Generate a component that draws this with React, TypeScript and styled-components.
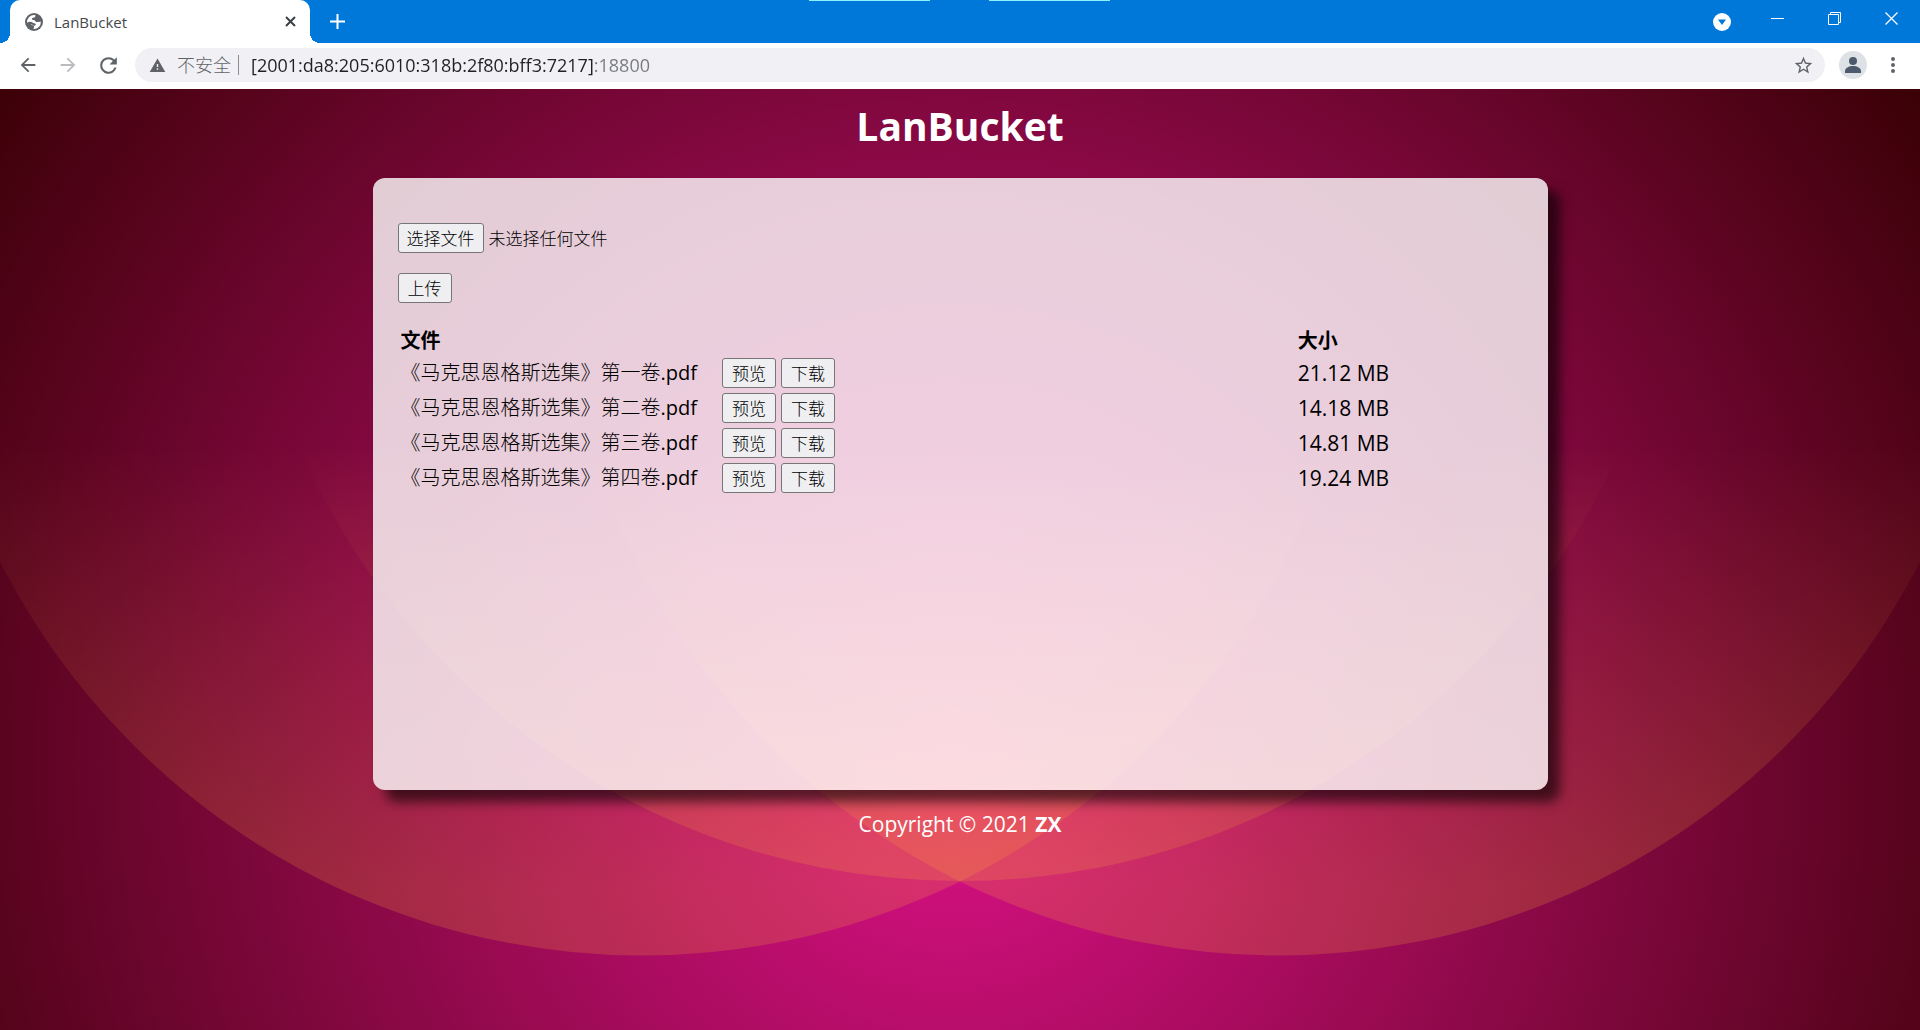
import React, { useState } from "react";
import styled, { createGlobalStyle } from "styled-components";

const fontStack = '"Open Sans", "Noto Sans CJK SC", sans-serif';

const GlobalStyle = createGlobalStyle`
  *, *::before, *::after { box-sizing: border-box; }
  html, body, #root { height: 100%; }
  body { margin: 0; font-family: ${fontStack}; font-size: 20px; color: #000; }
  button, input { font-family: inherit; }
`;

const Window = styled.div`
  min-height: 100%;
  display: flex;
  flex-direction: column;
`;

/* ---------- browser chrome ---------- */

const TabStrip = styled.header`
  position: relative;
  display: flex;
  align-items: center;
  height: 43px;
  padding-left: 10px;
  background: #0078d9;
`;

const TopEdge = styled.span<{ $left: string }>`
  position: absolute;
  top: 0;
  left: ${(p) => p.$left};
  width: 121px;
  height: 1px;
  background: #8ff0ff;
`;

const Tab = styled.div`
  position: relative;
  align-self: stretch;
  display: flex;
  align-items: center;
  gap: 11px;
  width: 300px;
  margin-right: 10px;
  padding: 0 12px 0 15px;
  border-radius: 10px 10px 0 0;
  background: #fff;
  &::before, &::after {
    content: "";
    position: absolute;
    bottom: 0;
    width: 10px;
    height: 10px;
  }
  &::before { right: 100%; background: radial-gradient(circle at 0 0, transparent 10px, #fff 10px); }
  &::after { left: 100%; background: radial-gradient(circle at 100% 0, transparent 10px, #fff 10px); }
`;

const TabTitle = styled.span`
  flex: 1;
  font-size: 15px;
  line-height: 20px;
  color: #45484c;
`;

const IconButton = styled.button<{ $w?: number; $color?: string }>`
  display: flex;
  align-items: center;
  justify-content: center;
  flex: none;
  width: ${(p) => p.$w ?? 40}px;
  height: 34px;
  padding: 0;
  border: 0;
  background: transparent;
  color: ${(p) => p.$color ?? "#5f6368"};
`;

const TabSearch = styled(IconButton)`
  margin: 0 7px 0 auto;
`;

const WindowControls = styled.div`
  display: flex;
  align-items: flex-start;
  height: 40px;
`;

const Toolbar = styled.nav`
  display: flex;
  align-items: center;
  height: 46px;
  padding: 0 7px 2px 8px;
  background: #fff;
`;

const Omnibox = styled.div`
  flex: 1;
  display: flex;
  align-items: center;
  height: 34px;
  margin: 0 8px 0 7px;
  padding: 0 2px 0 14px;
  border-radius: 17px;
  background: #f1f0f5;
  color: #5f6368;
  font-size: 18px;
`;

const Insecure = styled.span`
  margin-left: 11px;
  padding-right: 7px;
  border-right: 1px solid #8a8c90;
  font-weight: 300;
  line-height: 20px;
`;

const Address = styled.input`
  flex: 1;
  min-width: 0;
  margin-left: 12px;
  padding: 0;
  border: 0;
  outline: 0;
  font-size: 18px;
  line-height: 26px;
  color: #202124;
  background: linear-gradient(to right, #202124 343px, #76797d 343px);
  background-clip: text;
  -webkit-background-clip: text;
  -webkit-text-fill-color: transparent;
`;

/* ---------- page ---------- */

const Page = styled.div`
  position: relative;
  flex: 1;
  display: flex;
  flex-direction: column;
  align-items: center;
  overflow: hidden;
  background: #330000;
`;

const Backdrop = styled.svg`
  position: absolute;
  inset: 0;
  width: 100%;
  height: 100%;
`;

const Title = styled.h1`
  position: relative;
  margin: 9px 0 25px;
  font-size: 39px;
  font-weight: 700;
  line-height: 55px;
  color: #fff;
`;

const Card = styled.main`
  position: relative;
  width: 1175px;
  max-width: 92%;
  min-height: 612px;
  padding: 45px 25px 25px;
  border-radius: 12px;
  background: rgba(255, 255, 255, 0.8);
  box-shadow: 12px 12px 12px rgba(0, 0, 0, 0.6);
`;

const UploadForm = styled.form`
  display: flex;
  flex-direction: column;
  align-items: flex-start;
  gap: 20px;
  font-size: 17px;
  font-weight: 300;
`;

const FileRow = styled.div`
  display: flex;
  align-items: center;
  gap: 5px;
  line-height: 30px;
`;

const Picked = styled.span`
  padding-top: 2px;
  line-height: 28px;
`;

const HiddenFile = styled.input`
  position: absolute;
  width: 1px;
  height: 1px;
  opacity: 0;
`;

const buttonLook = `
  display: inline-flex;
  align-items: center;
  justify-content: center;
  min-width: 54px;
  height: 30px;
  padding: 2px 8px 0;
  border: 1px solid #767676;
  border-radius: 3px;
  background: #efeff2;
  color: #000;
  font-size: 17px;
  font-weight: 300;
  line-height: 24px;
`;

const PickLabel = styled.label`${buttonLook}`;
const Button = styled.button`${buttonLook}`;

const Files = styled.table`
  width: 100%;
  margin-top: 23px;
  border-spacing: 2px;
  table-layout: fixed;
  th, td { padding: 1px; text-align: left; vertical-align: middle; }
  th { font-weight: 700; line-height: 24px; }
  td { height: 33px; line-height: 30px; }
`;

const NameHead = styled.th`width: 80%;`;

const NameCell = styled.div`
  display: flex;
  align-items: center;
  gap: 5px;
`;

const FileName = styled.span`
  margin-right: 20px;
  font-weight: 300;
`;

const Extension = styled.span`
  font-weight: 400;
`;

const SizeCell = styled.td`
  font-size: 21px;
`;

const Footer = styled.footer`
  position: relative;
  margin-top: 20px;
  font-size: 21px;
  line-height: 28px;
  color: #fff;
`;

const files = [
  { name: "《马克思恩格斯选集》第一卷", ext: ".pdf", size: "21.12 MB" },
  { name: "《马克思恩格斯选集》第二卷", ext: ".pdf", size: "14.18 MB" },
  { name: "《马克思恩格斯选集》第三卷", ext: ".pdf", size: "14.81 MB" },
  { name: "《马克思恩格斯选集》第四卷", ext: ".pdf", size: "19.24 MB" },
];

const Icon = ({ d, size = 22 }: { d: string; size?: number }) => (
  <svg width={size} height={size} viewBox="0 0 24 24" fill="currentColor" aria-hidden="true">
    <path d={d} />
  </svg>
);

const icons = {
  back: "M20 11H7.83l5.59-5.59L12 4l-8 8 8 8 1.41-1.41L7.83 13H20v-2z",
  forward: "M12 4l-1.41 1.41L16.17 11H4v2h12.17l-5.58 5.59L12 20l8-8z",
  reload:
    "M17.65 6.35A7.96 7.96 0 0 0 12 4a8 8 0 1 0 7.73 10h-2.08A6 6 0 1 1 12 6c1.66 0 3.14.69 4.22 1.78L13 11h7V4l-2.35 2.35z",
  warning: "M1 21h22L12 2 1 21zm12-3h-2v-2h2v2zm0-4h-2v-4h2v4z",
  star:
    "M22 9.24l-7.19-.62L12 2 9.19 8.63 2 9.24l5.46 4.73L5.82 21 12 17.27 18.18 21l-1.63-7.03L22 9.24zM12 15.4l-3.76 2.27 1-4.28-3.32-2.88 4.38-.38L12 6.1l1.71 4.04 4.38.38-3.32 2.88 1 4.28L12 15.4z",
  more:
    "M12 8a2 2 0 1 0 0-4 2 2 0 0 0 0 4zm0 2a2 2 0 1 0 0 4 2 2 0 0 0 0-4zm0 6a2 2 0 1 0 0 4 2 2 0 0 0 0-4z",
};

function Globe() {
  return (
    <svg width="18" height="18" viewBox="0 0 24 24" aria-hidden="true">
      <circle cx="12" cy="12" r="12" fill="#5f6368" />
      <path
        fill="#fff"
        d="M13.500 2.800c.8 1.400.3 2.700-1.200 3.200-1.300.4-2.800.3-3 1.700-.2 1.500 1.300 1.500 2.600 1.700 1.700.3 1.500 2.200 3.100 2.600 1.800.4 3.600-.6 6.200-.2a9.300 9.300 0 0 1-9.700 9.500c-.4-1.300.9-1.900.6-3.300-.3-1.500-1.900-1.200-2.900-2.200-1.400-1.400-3.600-2.300-6.400-2.600A9.300 9.300 0 0 1 13.500 2.800z"
      />
      <path
        fill="#5f6368"
        d="M3 12.500c3-1.300 5.500-1 7 .3 1.300 1.100 3.300.6 4.200 2 .6 1-.3 2.200-1.700 2.200-2 0-2.300-1.700-4-2.200-1.700-.5-3.400.1-5.200-.3z"
      />
    </svg>
  );
}

function PageBackdrop() {
  return (
    <Backdrop viewBox="0 0 800 400" preserveAspectRatio="xMinYMin slice" aria-hidden="true">
      <defs>
        <radialGradient id="glow" cx="396" cy="281" r="514" gradientUnits="userSpaceOnUse">
          <stop offset="0" stopColor="#D18" />
          <stop offset="1" stopColor="#330000" />
        </radialGradient>
        <linearGradient id="petal" x1="400" y1="148" x2="400" y2="333" gradientUnits="userSpaceOnUse">
          <stop offset="0" stopColor="#FA3" stopOpacity="0" />
          <stop offset="1" stopColor="#FA3" stopOpacity="0.5" />
        </linearGradient>
      </defs>
      <rect fill="url(#glow)" width="800" height="400" />
      <g fillOpacity="0.4">
        <circle fill="url(#petal)" cx="267.5" cy="61" r="300" />
        <circle fill="url(#petal)" cx="532.5" cy="61" r="300" />
        <circle fill="url(#petal)" cx="400" cy="30" r="300" />
      </g>
    </Backdrop>
  );
}

function BrowserChrome() {
  return (
    <>
      <TabStrip>
        <TopEdge $left="809px" />
        <TopEdge $left="989px" />
        <Tab>
          <Globe />
          <TabTitle>LanBucket</TabTitle>
          <IconButton $w={16} $color="#3c4043" aria-label="关闭标签页">
            <svg width="11" height="11" viewBox="0 0 11 11" stroke="currentColor" strokeWidth="2">
              <path d="M1 1l9 9M10 1l-9 9" />
            </svg>
          </IconButton>
        </Tab>
        <IconButton $w={34} $color="#fff" aria-label="新标签页">
          <svg width="15" height="15" viewBox="0 0 15 15" stroke="currentColor" strokeWidth="2">
            <path d="M7.500 0v15M0 7.500h15" />
          </svg>
        </IconButton>
        <TabSearch $color="#fff" aria-label="搜索标签页">
          <svg width="18" height="18" viewBox="0 0 18 18">
            <circle cx="9" cy="9" r="9" fill="#fff" />
            <path d="M5 6.500h8L9 12z" fill="#0078d9" />
          </svg>
        </TabSearch>
        <WindowControls>
          <IconButton $w={57} $color="#fff" aria-label="最小化">
            <svg width="13" height="13" viewBox="0 0 13 13" stroke="currentColor">
              <path d="M0 6.500h13" />
            </svg>
          </IconButton>
          <IconButton $w={57} $color="#fff" aria-label="还原">
            <svg width="13" height="13" viewBox="0 0 13 13" stroke="currentColor" fill="none">
              <path d="M.5 2.500h10v10H.5zM2.500 2.500v-2h10v10h-2" />
            </svg>
          </IconButton>
          <IconButton $w={57} $color="#fff" aria-label="关闭">
            <svg width="13" height="13" viewBox="0 0 13 13" stroke="currentColor" strokeWidth="1.300">
              <path d="M.5.5l12 12M12.500.5l-12 12" />
            </svg>
          </IconButton>
        </WindowControls>
      </TabStrip>
      <Toolbar>
        <IconButton aria-label="后退"><Icon d={icons.back} /></IconButton>
        <IconButton $color="#b9bbbe" aria-label="前进"><Icon d={icons.forward} /></IconButton>
        <IconButton aria-label="重新加载"><Icon d={icons.reload} size={25} /></IconButton>
        <Omnibox>
          <Icon d={icons.warning} size={17} />
          <Insecure>不安全</Insecure>
          <Address aria-label="地址" defaultValue="[2001:da8:205:6010:318b:2f80:bff3:7217]:18800" />
          <IconButton aria-label="收藏"><Icon d={icons.star} size={21} /></IconButton>
        </Omnibox>
        <IconButton aria-label="用户">
          <svg width="28" height="28" viewBox="0 0 28 28">
            <circle cx="14" cy="14" r="14" fill="#dee1e6" />
            <circle cx="14" cy="10" r="4" fill="#4d5a6b" />
            <path d="M6 22v-2c0-3 4-5 8-5s8 2 8 5v2z" fill="#4d5a6b" />
          </svg>
        </IconButton>
        <IconButton aria-label="更多"><Icon d={icons.more} size={24} /></IconButton>
      </Toolbar>
    </>
  );
}

export default function App() {
  const [picked, setPicked] = useState("未选择任何文件");
  return (
    <Window>
      <GlobalStyle />
      <BrowserChrome />
      <Page>
        <PageBackdrop />
        <Title>LanBucket</Title>
        <Card>
          <UploadForm onSubmit={(e) => e.preventDefault()}>
            <FileRow>
              <HiddenFile
                id="file"
                type="file"
                onChange={(e) => setPicked(e.target.files?.[0]?.name ?? "未选择任何文件")}
              />
              <PickLabel htmlFor="file">选择文件</PickLabel>
              <Picked>{picked}</Picked>
            </FileRow>
            <Button type="submit">上传</Button>
          </UploadForm>
          <Files>
            <thead>
              <tr>
                <NameHead scope="col">文件</NameHead>
                <th scope="col">大小</th>
              </tr>
            </thead>
            <tbody>
              {files.map((f) => (
                <tr key={f.name}>
                  <td>
                    <NameCell>
                      <FileName>
                        {f.name}
                        <Extension>{f.ext}</Extension>
                      </FileName>
                      <Button type="button">预览</Button>
                      <Button type="button">下载</Button>
                    </NameCell>
                  </td>
                  <SizeCell>{f.size}</SizeCell>
                </tr>
              ))}
            </tbody>
          </Files>
        </Card>
        <Footer>
          Copyright © 2021 <strong>ZX</strong>
        </Footer>
      </Page>
    </Window>
  );
}
